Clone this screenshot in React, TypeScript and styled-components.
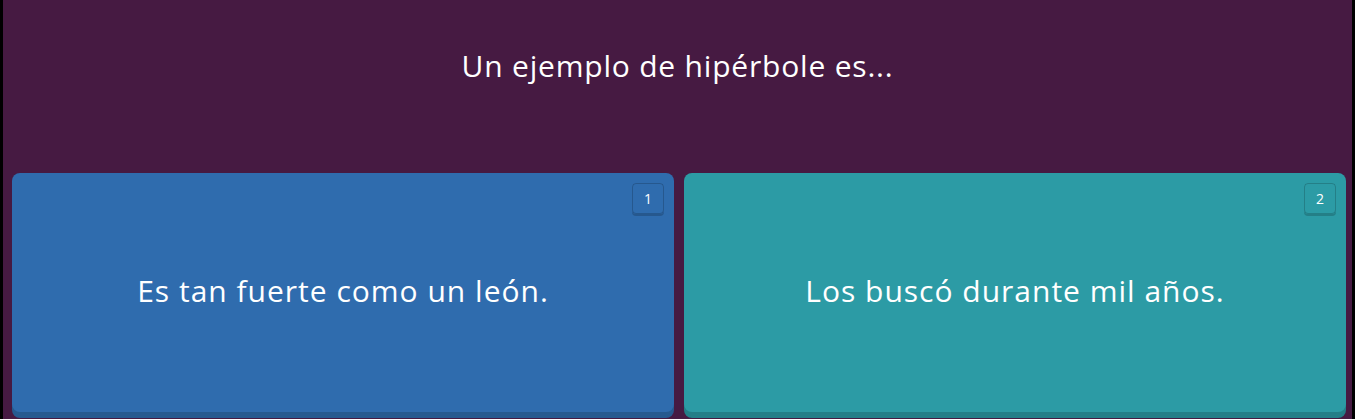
import React from 'react';
import styled, { createGlobalStyle } from 'styled-components';

const GlobalStyle = createGlobalStyle`
  html, body {
    margin: 0;
    padding: 0;
    background: #000;
  }
  body {
    font-family: "Open Sans", "Noto Sans", sans-serif;
  }
`;

interface Answer {
  id: number;
  text: string;
  color: string;
  shade: string;
}

const answers: Answer[] = [
  { id: 1, text: 'Es tan fuerte como un león.', color: '#2f6cae', shade: '#265a8f' },
  { id: 2, text: 'Los buscó durante mil años.', color: '#2c9ba5', shade: '#237f88' },
];

const App = () => {
  return (
    <>
      <GlobalStyle />
      <Screen>
        <QuestionArea>
          <QuestionText>Un ejemplo de hipérbole es...</QuestionText>
        </QuestionArea>
        <AnswerGrid>
          {answers.map((a) => (
            <AnswerCard key={a.id} $bg={a.color} $shade={a.shade}>
              <KeyBadge>{a.id}</KeyBadge>
              <AnswerText>{a.text}</AnswerText>
            </AnswerCard>
          ))}
        </AnswerGrid>
      </Screen>
    </>
  );
};

export default App;

const Screen = styled.div`
  margin: 0 3px;
  height: 419px;
  overflow: hidden;
  background: #461a42;
  display: flex;
  flex-direction: column;
`;

const QuestionArea = styled.div`
  height: 173px;
  box-sizing: border-box;
  padding-top: 46px;
  display: flex;
  justify-content: center;
  align-items: flex-start;
`;

const QuestionText = styled.h1`
  margin: 0;
  color: #ffffff;
  font-size: 30px;
  font-weight: 400;
  line-height: 40px;
  letter-spacing: 0.8px;
`;

const AnswerGrid = styled.div`
  display: grid;
  grid-template-columns: 1fr 1fr;
  gap: 10px;
  padding: 0 6px 0 9px;
`;

const AnswerCard = styled.div<{ $bg: string; $shade: string }>`
  position: relative;
  height: 239px;
  border-radius: 8px;
  background: ${(p) => p.$bg};
  box-shadow: 0 6px 0 ${(p) => p.$shade};
  display: flex;
  align-items: center;
  justify-content: center;
`;

const KeyBadge = styled.div`
  position: absolute;
  top: 10px;
  right: 10px;
  width: 32px;
  height: 31px;
  box-sizing: border-box;
  border: 1px solid rgba(0, 0, 0, 0.18);
  border-radius: 4px;
  box-shadow: 0 2px 0 rgba(0, 0, 0, 0.18);
  color: #ffffff;
  font-size: 14px;
  display: flex;
  align-items: center;
  justify-content: center;
`;

const AnswerText = styled.span`
  color: #ffffff;
  font-size: 30px;
  font-weight: 400;
  letter-spacing: 1px;
  margin-top: -4px;
`;
